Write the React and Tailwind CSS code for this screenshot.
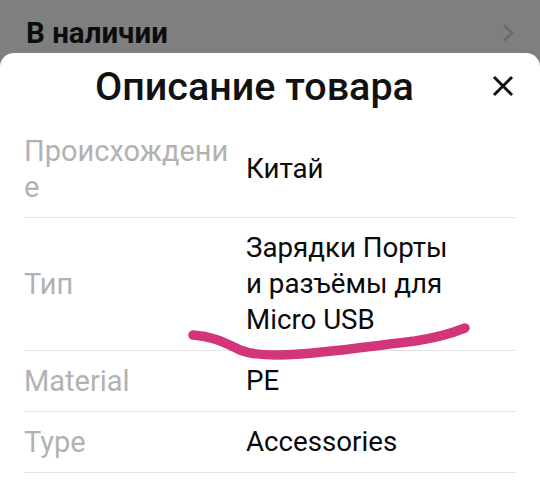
import React from "react";

const rows = [
  { label: "Происхождение", value: "Китай" },
  { label: "Тип", value: "Зарядки Порты и разъёмы для Micro USB" },
  { label: "Material", value: "PE" },
  { label: "Type", value: "Accessories" },
];

const App = () => {
  return (
    <div
      className="relative w-[540px] h-[503px] overflow-hidden bg-[#7f7f7f] flex flex-col"
      style={{ fontFamily: "Roboto, 'Noto Sans', sans-serif" }}
    >
      <div className="h-[53px] shrink-0 flex items-center justify-between pl-[26px] pr-[26px]">
        <span className="text-[29.5px] font-bold text-[#0d0d0d] leading-none mt-[14px]">В наличии</span>
        <svg width="12" height="18" viewBox="0 0 12 18" className="mt-[12px]">
          <path d="M2 1.5 L10 9 L2 16.5" fill="none" stroke="#6a6a6a" strokeWidth="2.6" />
        </svg>
      </div>

      <div className="flex-1 bg-white rounded-t-[14px]">
        <div className="h-[68px] flex items-center">
          <h2 className="ml-[95px] text-[39.5px] font-medium text-[#111] leading-none">Описание товара</h2>
          <div className="flex-1" />
          <svg width="22" height="22" viewBox="0 0 22 22" className="mr-[26px] mt-[-2px]">
            <path d="M2 2 L20 20 M20 2 L2 20" fill="none" stroke="#111" strokeWidth="3" />
          </svg>
        </div>

        {rows.map((r) => (
          <div key={r.label} className="mx-[24px] flex items-center py-3 border-b border-[#e3e3e3]">
            <div className="w-[212px] shrink-0 break-words text-[29px] leading-[36px] text-[#b2b2b2]">
              {r.label}
            </div>
            <div className="ml-[10px] w-[214px] text-[27.7px] leading-[36px] text-[#0a0a0a]">{r.value}</div>
          </div>
        ))}
      </div>

      <svg
        className="absolute left-0 top-0 pointer-events-none"
        width="540"
        height="503"
        viewBox="0 0 540 503"
      >
        <path
          d="M193 335 C210 336 222 341 240 350 C255 356 275 356 300 354 C340 351 380 345 415 341 C435 338 450 334 465 328"
          fill="none"
          stroke="#d3357b"
          strokeWidth="9.5"
          strokeLinecap="round"
        />
      </svg>
    </div>
  );
};

export default App;
